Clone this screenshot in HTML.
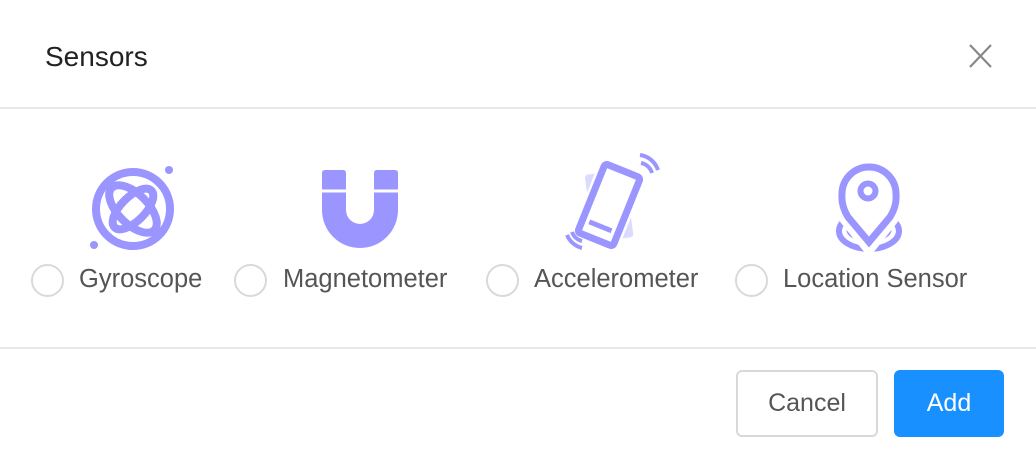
<!DOCTYPE html>
<html><head><meta charset="utf-8"><style>
body{margin:0;width:1036px;height:458px;background:#fff;font-family:"Liberation Sans",sans-serif;position:relative;overflow:hidden}
.t{position:absolute;left:45px;top:41px;font-size:28px;color:#222}
.hr{position:absolute;left:0;width:1036px;height:2px;background:#e8e8e8}
.r{position:absolute;width:29px;height:29px;border:2px solid #d9d9d9;border-radius:50%;top:264px}
.l{position:absolute;top:264px;font-size:25.5px;color:#555;line-height:30px}
.btn{position:absolute;top:370px;height:67px;border-radius:6px;font-size:25px;display:flex;align-items:center;justify-content:center;box-sizing:border-box}
</style></head><body>
<div class="t">Sensors</div>
<svg style="position:absolute;left:966px;top:42px" width="28" height="28"><path d="M4 3L25 25M25 3L4 25" stroke="#888" stroke-width="2.2"/></svg>
<div class="hr" style="top:107px"></div>
<svg style="position:absolute;left:0;top:140px" width="1036" height="120" fill="none" stroke="#9b95ff">
<g stroke-width="8">
<circle cx="133" cy="69" r="37"/>
<ellipse cx="133" cy="69" rx="30" ry="15" transform="rotate(45 133 69)"/>
<ellipse cx="133" cy="69" rx="26" ry="12" transform="rotate(-45 133 69)"/>
</g>
<circle cx="169" cy="30" r="4" fill="#9b95ff" stroke="none"/>
<circle cx="94" cy="105" r="4" fill="#9b95ff" stroke="none"/>
<path d="M322 33Q322 30 325 30H343Q346 30 346 33V70A14 14 0 0 0 374 70V33Q374 30 377 30H395Q398 30 398 33V70A38 38 0 0 1 322 70Z" fill="#9b95ff" stroke="none"/>
<path d="M320 51H348M372 51H400" stroke="#fff" stroke-width="3"/>
<g transform="rotate(22 609 65)">
<rect x="589" y="32" width="40" height="68" rx="3" fill="#dcdaff" stroke="none" transform="rotate(-30 609 65)"/>
<rect x="590" y="28" width="38" height="74" rx="3" fill="#fff" stroke="#fff" stroke-width="12"/>
<rect x="590" y="28" width="38" height="74" rx="3" stroke-width="7"/>
<path d="M597 88H621" stroke-width="5"/>
</g>
<path d="M641 23A14 14 0 0 1 652 33M640 15A22 22 0 0 1 658 30M572 92A14 14 0 0 0 582 101M567 95A22 22 0 0 0 582 108" stroke-width="4"/>
<ellipse cx="869" cy="91" rx="30" ry="18" stroke-width="6"/>
<ellipse cx="869" cy="90" rx="20" ry="9" stroke-width="5"/>
<path d="M869 110L845 80Q836 66 838 53A31 31 0 0 1 900 53Q902 66 893 80Z" fill="#fff" stroke="#fff" stroke-width="10"/>
<path d="M869 102L848 77Q841 66 842 54A27 27 0 0 1 896 54Q897 66 890 77Z" stroke-width="7"/>
<circle cx="868" cy="51" r="7.5" stroke-width="6"/>
</svg>
<div class="r" style="left:31px"></div><div class="l" style="left:79px">Gyroscope</div>
<div class="r" style="left:234px"></div><div class="l" style="left:283px">Magnetometer</div>
<div class="r" style="left:486px"></div><div class="l" style="left:534px">Accelerometer</div>
<div class="r" style="left:735px"></div><div class="l" style="left:783px">Location Sensor</div>
<div class="hr" style="top:347px"></div>
<div class="btn" style="left:736px;width:142px;border:2px solid #d9d9d9;color:#555">Cancel</div>
<div class="btn" style="left:894px;width:110px;background:#1890ff;color:#fff">Add</div>
</body></html>
